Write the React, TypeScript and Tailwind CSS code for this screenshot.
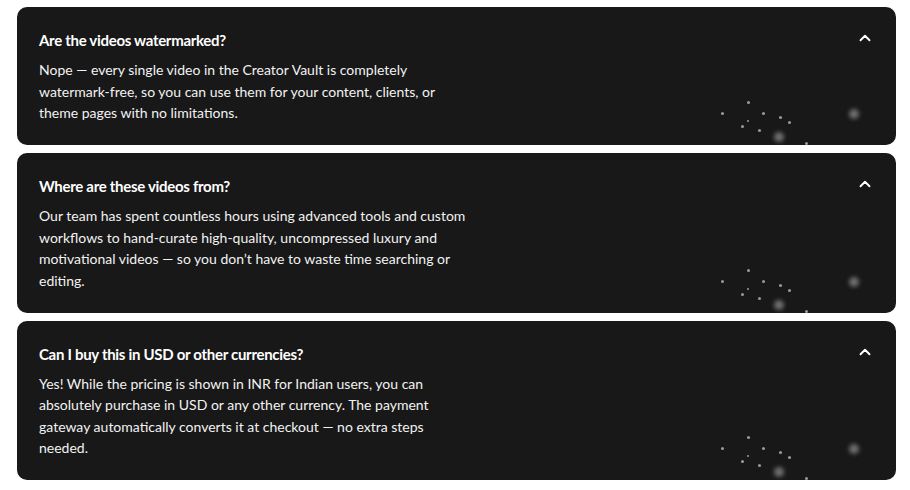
import React from 'react';
import { ChevronUp } from 'lucide-react';

const faqs = [
  {
    q: 'Are the videos watermarked?',
    a: 'Nope — every single video in the Creator Vault is completely watermark-free, so you can use them for your content, clients, or theme pages with no limitations.',
  },
  {
    q: 'Where are these videos from?',
    a: 'Our team has spent countless hours using advanced tools and custom workflows to hand-curate high-quality, uncompressed luxury and motivational videos — so you don’t have to waste time searching or editing.',
  },
  {
    q: 'Can I buy this in USD or other currencies?',
    a: 'Yes! While the pricing is shown in INR for Indian users, you can absolutely purchase in USD or any other currency. The payment gateway automatically converts it at checkout — no extra steps needed.',
  },
];

// sparkle dots, offsets from card's right / bottom edge
const dots = [
  { r: 172, b: 30, s: 3 },
  { r: 146, b: 41, s: 3 },
  { r: 131, b: 30, s: 3 },
  { r: 114, b: 26, s: 3 },
  { r: 105, b: 21, s: 3 },
  { r: 147, b: 23, s: 2 },
  { r: 152, b: 17, s: 3 },
  { r: 135, b: 13, s: 3 },
  { r: 88, b: 0, s: 3 },
];
const glows = [
  { r: 112, b: 3 },
  { r: 37, b: 26 },
];

const Sparkles = () => (
  <div className="pointer-events-none absolute inset-0">
    {dots.map((d, i) => (
      <span
        key={i}
        className="absolute rounded-full bg-[#9a9a9a]"
        style={{ right: d.r, bottom: d.b, width: d.s, height: d.s }}
      />
    ))}
    {glows.map((g, i) => (
      <span
        key={'g' + i}
        className="absolute h-[10px] w-[10px] rounded-full bg-[#6e6e6e] blur-[2px]"
        style={{ right: g.r, bottom: g.b }}
      />
    ))}
  </div>
);

export default function App() {
  return (
    <div className="flex min-h-[490px] w-full flex-col gap-2 bg-white pl-[17px] pr-[14px] pt-[7px] font-['Lato',sans-serif]">
      {faqs.map((f) => (
        <div key={f.q} className="relative overflow-hidden rounded-[10px] bg-[#181818] px-[22px] pt-[22px] pb-[21.5px] text-white">
          <Sparkles />
          <div className="relative flex items-center justify-between">
            <h3 className="text-[15px] font-bold leading-[22px] tracking-[-0.3px]">{f.q}</h3>
            <ChevronUp size={18} strokeWidth={2.5} className="-translate-y-[2px] text-white" />
          </div>
          <p className="relative mt-[8px] max-w-[432px] text-[14px] leading-[21.5px] text-[#f2f2f2]">{f.a}</p>
        </div>
      ))}
    </div>
  );
}
